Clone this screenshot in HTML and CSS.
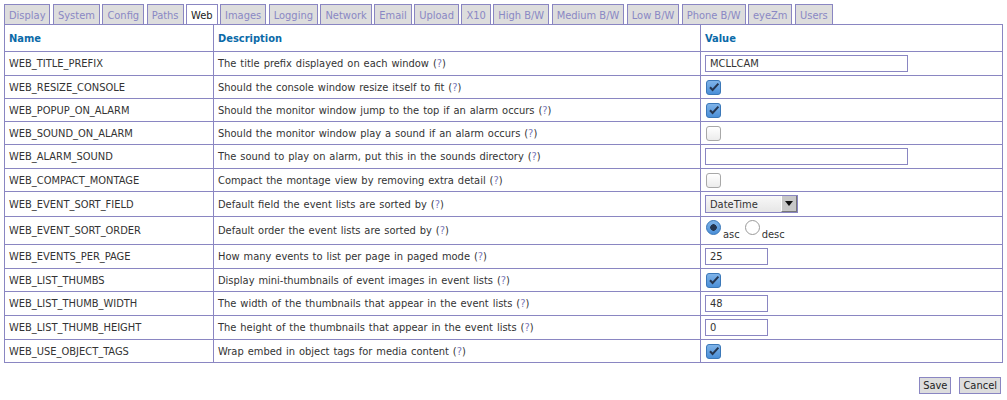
FILE: index.html
```html
<!DOCTYPE html>
<html lang="en">
<head>
  <meta charset="UTF-8">
  <title>Options - Web</title>
  <link rel="stylesheet" href="styles.css">
</head>
<body>

<ul class="zm-tabs">
  <li><a href="#">Display</a></li>
  <li><a href="#">System</a></li>
  <li><a href="#">Config</a></li>
  <li><a href="#">Paths</a></li>
  <li class="active"><a href="#">Web</a></li>
  <li><a href="#">Images</a></li>
  <li><a href="#">Logging</a></li>
  <li><a href="#">Network</a></li>
  <li><a href="#">Email</a></li>
  <li><a href="#">Upload</a></li>
  <li><a href="#">X10</a></li>
  <li><a href="#">High B/W</a></li>
  <li><a href="#">Medium B/W</a></li>
  <li><a href="#">Low B/W</a></li>
  <li><a href="#">Phone B/W</a></li>
  <li><a href="#">eyeZm</a></li>
  <li><a href="#">Users</a></li>
</ul>

<form class="zm-form">
<table class="zm-options">
  <thead>
    <tr>
      <th class="col-name">Name</th>
      <th class="col-desc">Description</th>
      <th>Value</th>
    </tr>
  </thead>
  <tbody>
    <tr>
      <td>WEB_TITLE_PREFIX</td>
      <td>The title prefix displayed on each window (<a href="#">?</a>)</td>
      <td><input type="text" class="zm-text zm-large" value="MCLLCAM"></td>
    </tr>
    <tr>
      <td>WEB_RESIZE_CONSOLE</td>
      <td>Should the console window resize itself to fit (<a href="#">?</a>)</td>
      <td><span class="zm-check on"><svg viewBox="0 0 14 14" width="14" height="14"><path d="M3 7.2l2.6 2.8L11.4 3.6" /></svg></span></td>
    </tr>
    <tr>
      <td>WEB_POPUP_ON_ALARM</td>
      <td>Should the monitor window jump to the top if an alarm occurs (<a href="#">?</a>)</td>
      <td><span class="zm-check on"><svg viewBox="0 0 14 14" width="14" height="14"><path d="M3 7.2l2.6 2.8L11.4 3.6" /></svg></span></td>
    </tr>
    <tr>
      <td>WEB_SOUND_ON_ALARM</td>
      <td>Should the monitor window play a sound if an alarm occurs (<a href="#">?</a>)</td>
      <td><span class="zm-check"></span></td>
    </tr>
    <tr>
      <td>WEB_ALARM_SOUND</td>
      <td>The sound to play on alarm, put this in the sounds directory (<a href="#">?</a>)</td>
      <td><input type="text" class="zm-text zm-large" value=""></td>
    </tr>
    <tr>
      <td>WEB_COMPACT_MONTAGE</td>
      <td>Compact the montage view by removing extra detail (<a href="#">?</a>)</td>
      <td><span class="zm-check"></span></td>
    </tr>
    <tr>
      <td>WEB_EVENT_SORT_FIELD</td>
      <td>Default field the event lists are sorted by (<a href="#">?</a>)</td>
      <td>
        <span class="zm-select">
          <select>
            <option>DateTime</option>
            <option>Id</option>
            <option>Name</option>
            <option>Cause</option>
          </select>
          <span class="zm-select-btn"><svg viewBox="0 0 8 5" width="8" height="5"><path d="M0 0h8L4 5z" /></svg></span>
        </span>
      </td>
    </tr>
    <tr>
      <td>WEB_EVENT_SORT_ORDER</td>
      <td>Default order the event lists are sorted by (<a href="#">?</a>)</td>
      <td class="zm-radios">
        <span class="zm-radio on"></span><span class="zm-radio-label">asc</span>
        <span class="zm-radio"></span><span class="zm-radio-label">desc</span>
      </td>
    </tr>
    <tr>
      <td>WEB_EVENTS_PER_PAGE</td>
      <td>How many events to list per page in paged mode (<a href="#">?</a>)</td>
      <td><input type="text" class="zm-text zm-small" value="25"></td>
    </tr>
    <tr>
      <td>WEB_LIST_THUMBS</td>
      <td>Display mini-thumbnails of event images in event lists (<a href="#">?</a>)</td>
      <td><span class="zm-check on"><svg viewBox="0 0 14 14" width="14" height="14"><path d="M3 7.2l2.6 2.8L11.4 3.6" /></svg></span></td>
    </tr>
    <tr>
      <td>WEB_LIST_THUMB_WIDTH</td>
      <td>The width of the thumbnails that appear in the event lists (<a href="#">?</a>)</td>
      <td><input type="text" class="zm-text zm-small" value="48"></td>
    </tr>
    <tr>
      <td>WEB_LIST_THUMB_HEIGHT</td>
      <td>The height of the thumbnails that appear in the event lists (<a href="#">?</a>)</td>
      <td><input type="text" class="zm-text zm-small" value="0"></td>
    </tr>
    <tr>
      <td>WEB_USE_OBJECT_TAGS</td>
      <td>Wrap embed in object tags for media content (<a href="#">?</a>)</td>
      <td><span class="zm-check on"><svg viewBox="0 0 14 14" width="14" height="14"><path d="M3 7.2l2.6 2.8L11.4 3.6" /></svg></span></td>
    </tr>
  </tbody>
</table>

<div class="zm-buttons">
  <button type="button">Save</button>
  <button type="button">Cancel</button>
</div>
</form>

</body>
</html>
```

FILE: styles.css
```css
body {
  font-family: 'DejaVu Sans Condensed', 'DejaVu Sans', Verdana, sans-serif;
  font-size: 11px;
  word-spacing: 0.8px;
  color: #333333;
  margin: 4px 4px 0 4px;
  background-color: #ffffff;
}

a {
  color: #7a7ab8;
  text-decoration: none;
}

.zm-tabs {
  list-style: none;
  margin: 0;
  padding: 0;
  display: flex;
  gap: 2.5px;
  word-spacing: 0;
}

.zm-tabs li {
  background-color: #dddddd;
  border: 1px solid #8a86c2;
  border-bottom: none;
  height: 19px;
  padding: 0 4px;
  display: flex;
  align-items: center;
}

.zm-tabs li a {
  color: #8a88c4;
  padding-top: 2px;
}

.zm-tabs li.active {
  background-color: #ffffff;
}

.zm-tabs li.active a {
  color: #222222;
}

.zm-options {
  width: 100%;
  border-collapse: collapse;
  border: 1px solid #8a86c2;
}

.zm-options th,
.zm-options td {
  border: 1px solid #8a86c2;
  text-align: left;
  padding: 3px 4px;
  vertical-align: middle;
}

.zm-options th {
  color: #0b6aa8;
  font-weight: bold;
  padding: 7px 4px 6px 4px;
}

.zm-options td {
  height: 16px;
}

.col-name {
  width: 200px;
}

.col-desc {
  width: 478px;
}

.zm-text {
  font-family: inherit;
  font-size: 11px;
  color: #333333;
  border: 1px solid #8a86c2;
  height: 17px;
  box-sizing: border-box;
  padding: 0 4px;
  margin: 0;
  display: block;
  outline: none;
}

.zm-large {
  width: 203px;
}

.zm-small {
  width: 63px;
}

.zm-check {
  display: block;
  width: 13px;
  height: 13px;
  margin-left: 1px;
  border: 1px solid #a8a8a8;
  border-radius: 3px;
  background: linear-gradient(#ffffff, #ececec);
}

.zm-check.on {
  border-color: #3b78b8;
  background: linear-gradient(#7fb3e8, #4a8fd8);
}

.zm-check svg {
  display: block;
  margin: -1px 0 0 0;
}

.zm-check svg path {
  fill: none;
  stroke: #253650;
  stroke-width: 2;
}

.zm-select {
  display: inline-flex;
  align-items: stretch;
  height: 18px;
  box-sizing: border-box;
  border: 1px solid #8a86c2;
  background: linear-gradient(#f8f8f8, #e6e6e6);
  vertical-align: middle;
}

.zm-select select {
  appearance: none;
  -webkit-appearance: none;
  border: none;
  background: transparent;
  font-family: inherit;
  font-size: 11px;
  color: #333333;
  width: 75px;
  padding: 0 4px;
  margin: 0;
  outline: none;
}

.zm-select-btn {
  width: 14px;
  background-color: #c8c8c8;
  border-left: 1px solid #ffffff;
  border-right: 1px solid #777777;
  border-bottom: 1px solid #777777;
  display: flex;
  align-items: center;
  justify-content: center;
}

.zm-select-btn svg {
  fill: #111111;
}

.zm-radios {
  white-space: nowrap;
}

.zm-radio {
  display: inline-block;
  width: 13px;
  height: 13px;
  border: 1px solid #9a9a9a;
  border-radius: 50%;
  background: #ffffff;
  vertical-align: -2px;
  margin-left: 1px;
  box-sizing: content-box;
}

.zm-radio.on {
  border-color: #3b78b8;
  background: radial-gradient(circle, #253650 0 3px, transparent 3.5px), linear-gradient(#7fb3e8, #4a8fd8);
}

.zm-radio-label {
  vertical-align: -5px;
  margin: 0 0 0 2px;
}

.zm-buttons {
  display: flex;
  justify-content: flex-end;
  gap: 8px;
  margin-top: 14px;
  padding-right: 2px;
}

.zm-buttons button {
  font-family: inherit;
  font-size: 11px;
  color: #222222;
  background-color: #dddddd;
  border: 1px solid #8a86c2;
  padding: 1px 3px;
  height: 17px;
  cursor: pointer;
}
```
